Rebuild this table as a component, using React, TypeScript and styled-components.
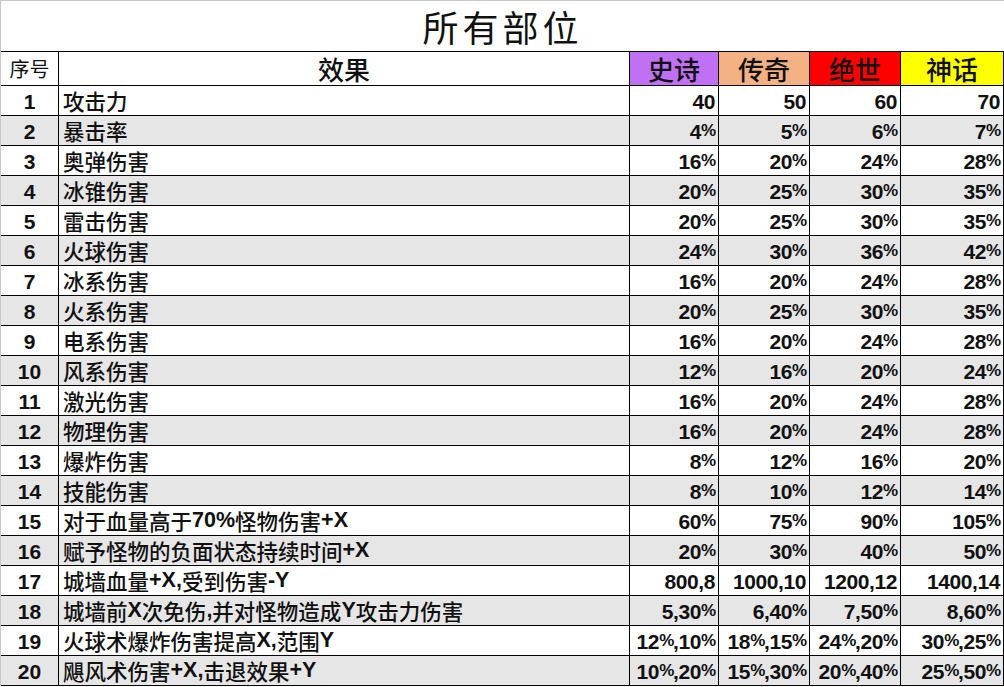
import React from "react";
import styled, { createGlobalStyle } from "styled-components";

const Global = createGlobalStyle`
  html, body { margin: 0; padding: 0; background: #fff; }
  body { font-family: "Liberation Sans", "Noto Sans CJK SC", sans-serif; color: #111; }
  * { box-sizing: border-box; }
`;

const COLS = "58px 571px 89px 91px 91px 103px";

const Sheet = styled.div`
  width: 1004px;
  border-top: 1px solid #c8c8c8;
  border-left: 1px solid #c8c8c8;
`;

const Title = styled.div`
  height: 51px;
  border-bottom: 1px solid #000;
  display: flex;
  align-items: center;
  justify-content: center;
  font-family: "Noto Sans CJK SC", "Noto Sans CJK TC", serif;
  font-weight: 400;
  font-size: 36px;
  letter-spacing: 4px;
  line-height: 1.2;
  padding-top: 2px;
`;

const Row = styled.div<{ $shade?: boolean; $h: number }>`
  display: grid;
  grid-template-columns: ${COLS};
  height: ${(p) => p.$h}px;
  background: ${(p) => (p.$shade ? "#e6e6e6" : "#fff")};
`;

const Cell = styled.div<{ $align?: "left" | "center" | "right"; $bg?: string }>`
  display: flex;
  align-items: center;
  justify-content: ${(p) =>
    p.$align === "left" ? "flex-start" : p.$align === "right" ? "flex-end" : "center"};
  border-right: 1px solid #000;
  border-bottom: 1px solid #000;
  background: ${(p) => p.$bg || "transparent"};
  white-space: nowrap;
  line-height: 1.2;
  min-width: 0;
`;

const HeadCell = styled(Cell)<{ $small?: boolean }>`
  font-family: "Noto Sans CJK SC", sans-serif;
  font-weight: ${(p) => (p.$small ? 400 : 500)};
  font-size: ${(p) => (p.$small ? "20px" : "26px")};
  padding-top: 1px;
  color: #111;
`;

const NumCell = styled(Cell)`
  font-family: "Liberation Sans", sans-serif;
  font-weight: 700;
  font-size: 21px;
  padding-top: 2px;
`;

const EffectCell = styled(Cell)`
  padding: 1px 0 0 4px;
  font-family: "Noto Sans CJK SC", sans-serif;
  font-weight: 500;
  font-size: 21.5px;
`;

const Latin = styled.span`
  font-family: "Liberation Sans", sans-serif;
  font-weight: 700;
`;

const ValueCell = styled(Cell)`
  padding: 2px 3px 0 0;
  font-family: "Liberation Sans", sans-serif;
  font-weight: 700;
  font-size: 21px;
  letter-spacing: -0.4px;
`;

const Pct = styled.span`
  font-size: 17px;
  letter-spacing: -1.2px;
`;

const rows: [string, string[]][] = [
  ["攻击力", ["40", "50", "60", "70"]],
  ["暴击率", ["4%", "5%", "6%", "7%"]],
  ["奥弹伤害", ["16%", "20%", "24%", "28%"]],
  ["冰锥伤害", ["20%", "25%", "30%", "35%"]],
  ["雷击伤害", ["20%", "25%", "30%", "35%"]],
  ["火球伤害", ["24%", "30%", "36%", "42%"]],
  ["冰系伤害", ["16%", "20%", "24%", "28%"]],
  ["火系伤害", ["20%", "25%", "30%", "35%"]],
  ["电系伤害", ["16%", "20%", "24%", "28%"]],
  ["风系伤害", ["12%", "16%", "20%", "24%"]],
  ["激光伤害", ["16%", "20%", "24%", "28%"]],
  ["物理伤害", ["16%", "20%", "24%", "28%"]],
  ["爆炸伤害", ["8%", "12%", "16%", "20%"]],
  ["技能伤害", ["8%", "10%", "12%", "14%"]],
  ["对于血量高于70%怪物伤害+X", ["60%", "75%", "90%", "105%"]],
  ["赋予怪物的负面状态持续时间+X", ["20%", "30%", "40%", "50%"]],
  ["城墙血量+X,受到伤害-Y", ["800,8", "1000,10", "1200,12", "1400,14"]],
  ["城墙前X次免伤,并对怪物造成Y攻击力伤害", ["5,30%", "6,40%", "7,50%", "8,60%"]],
  ["火球术爆炸伤害提高X,范围Y", ["12%,10%", "18%,15%", "24%,20%", "30%,25%"]],
  ["飓风术伤害+X,击退效果+Y", ["10%,20%", "15%,30%", "20%,40%", "25%,50%"]],
];

const tiers = [
  { name: "史诗", bg: "#c070f2" },
  { name: "传奇", bg: "#f4b183" },
  { name: "绝世", bg: "#ff0000" },
  { name: "神话", bg: "#ffff00" },
];

function renderValue(v: string) {
  const parts = v.split("%");
  return parts.map((p, i) => (
    <React.Fragment key={i}>
      {p}
      {i < parts.length - 1 && <Pct>%</Pct>}
    </React.Fragment>
  ));
}

function renderEffect(t: string) {
  return t
    .split(/([\x00-\x7F]+)/)
    .filter((s) => s.length > 0)
    .map((s, i) =>
      /^[\x00-\x7F]+$/.test(s) ? <Latin key={i}>{s}</Latin> : <React.Fragment key={i}>{s}</React.Fragment>
    );
}

export default function App() {
  return (
    <>
      <Global />
      <Sheet>
        <Title>所有部位</Title>
        <Row $h={34}>
          <HeadCell $small>序号</HeadCell>
          <HeadCell>效果</HeadCell>
          {tiers.map((t) => (
            <HeadCell key={t.name} $bg={t.bg}>
              {t.name}
            </HeadCell>
          ))}
        </Row>
        {rows.map(([eff, vals], i) => (
          <Row key={i} $h={30} $shade={i % 2 === 1}>
            <NumCell>{i + 1}</NumCell>
            <EffectCell $align="left">{renderEffect(eff)}</EffectCell>
            {vals.map((v, j) => (
              <ValueCell key={j} $align="right">
                {renderValue(v)}
              </ValueCell>
            ))}
          </Row>
        ))}
      </Sheet>
    </>
  );
}
